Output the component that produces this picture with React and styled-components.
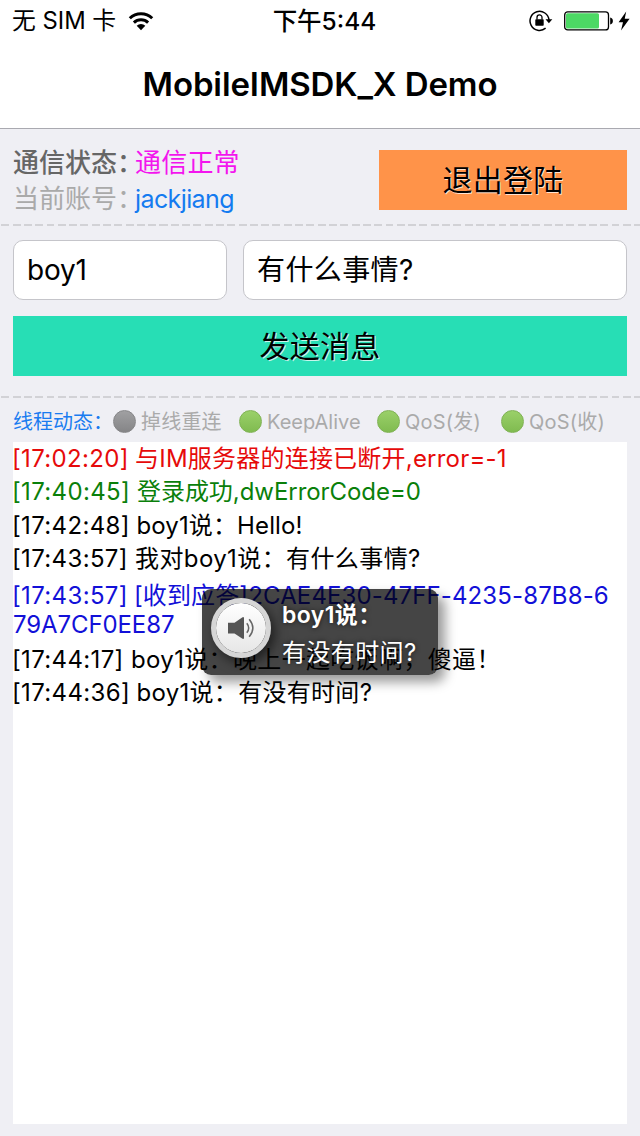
import React from "react";
import styled, { createGlobalStyle } from "styled-components";

const Global = createGlobalStyle`
  * { box-sizing: border-box; }
  body { margin: 0; background: #efeff4; }
`;

const Screen = styled.div`
  width: 640px;
  height: 1136px;
  display: flex;
  flex-direction: column;
  background: #efeff4;
  color: #000;
  font-family: Inter, "Noto Sans CJK SC", sans-serif;
  overflow: hidden;
`;

const Text = styled.span`
  white-space: pre;
  letter-spacing: ${(p) => p.$ls || 0}px;
`;

const TopBar = styled.header`
  height: 129px;
  background: #fff;
  border-bottom: 1px solid #a9a9b0;
`;

const StatusBar = styled.div`
  height: 40px;
  padding: 0 10px 0 12px;
  display: grid;
  grid-template-columns: 1fr auto 1fr;
  align-items: center;
  font-size: 23.8px;
  line-height: 42px;
`;

const Carrier = styled.div`
  display: flex;
  align-items: center;
  gap: 12px;
`;

const Clock = styled.div`
  font-size: 24.5px;
  font-weight: 500;
  padding-left: 7px;
`;

const Indicators = styled.div`
  display: flex;
  align-items: center;
  justify-content: flex-end;
`;

const Title = styled.h1`
  margin: 0;
  height: 88px;
  line-height: 89px;
  text-align: center;
  font-size: 33px;
  font-weight: 600;
  letter-spacing: -0.1px;
`;

const Account = styled.section`
  height: 95px;
  padding: 21px 13px 0;
  display: flex;
  justify-content: space-between;
`;

const Facts = styled.div`
  display: flex;
  flex-direction: column;
  font-size: 26px;
  line-height: 36px;
  margin-top: -5px;
`;

const Fact = styled.div`
  display: flex;
  height: 36px;
  color: ${(p) => p.$color};
`;

const FactName = styled.span`
  width: 122px;
  white-space: nowrap;
  color: ${(p) => p.$color};
  font-weight: ${(p) => p.$weight || 400};
`;

const FactValue = styled.span`
  font-size: ${(p) => p.$size || 26}px;
  letter-spacing: ${(p) => p.$ls || 0}px;
`;

const Button = styled.button`
  width: ${(p) => p.$width}px;
  height: 60px;
  padding: 0;
  border: 0;
  border-radius: 0;
  background: ${(p) => p.$bg};
  color: #000;
  font: 400 30px/61px Inter, "Noto Sans CJK SC", sans-serif;
  letter-spacing: 0.3px;
  text-shadow: 1px 1px 0 rgba(255, 255, 255, 0.75);
`;

const Divider = styled.div`
  height: 2px;
  background: repeating-linear-gradient(90deg, transparent 0 1.3px, #d2d2d6 1.3px 9.3px, transparent 9.3px 11.3px);
`;

const Compose = styled.section`
  height: 170px;
  padding: 14px 13px 0;
  display: flex;
  flex-direction: column;
  gap: 16px;
`;

const Fields = styled.div`
  display: grid;
  grid-template-columns: 214px 384px;
  gap: 16px;
`;

const Field = styled.div`
  height: 60px;
  padding-left: 13px;
  border: 1px solid #c5c5ca;
  border-radius: 10px;
  background: #fff;
  font-size: 28px;
  line-height: 59px;
`;

const Threads = styled.section`
  height: 44px;
  padding: 3px 13px 0;
  display: flex;
  align-items: flex-start;
  font-size: 20px;
  line-height: 42px;
  color: #aaa;
`;

const ThreadsName = styled.div`
  width: 100px;
  font-size: 20px;
  color: #1a7cf0;
  white-space: nowrap;
`;

const Thread = styled.div`
  width: ${(p) => p.$width}px;
  display: flex;
  gap: 5px;
  white-space: nowrap;
`;

const Dot = styled.i`
  width: 23px;
  height: 23px;
  margin-top: 9px;
  flex: none;
  border-radius: 50%;
  border: 1px solid ${(p) => (p.$on ? "#7fb253" : "#868688")};
  background: ${(p) =>
    p.$on ? "linear-gradient(#9ad069, #80bb50)" : "linear-gradient(#a0a0a2, #858587)"};
`;

const Log = styled.main`
  width: 614px;
  height: 682px;
  margin-left: 13px;
  background: #fff;
  font-size: 24px;
`;

const Entry = styled.div`
  height: ${(p) => p.$h || 33.4}px;
  line-height: 34px;
  color: ${(p) => p.$color || "#000"};
  white-space: pre;
`;

const Stamp = styled.span`
  display: inline-block;
  width: ${(p) => p.$width}px;
  margin-left: -1px;
  margin-right: 1px;
  letter-spacing: 0.35px;
`;

const Toast = styled.aside`
  position: absolute;
  left: 202px;
  top: 589px;
  width: 236px;
  height: 86px;
  padding: 9px 0 0 9px;
  display: flex;
  gap: 11px;
  border-radius: 9px;
  background: rgba(0, 0, 0, 0.73);
  box-shadow: 7px 7px 12px rgba(0, 0, 0, 0.4);
  color: #fff;
`;

const Badge = styled.div`
  width: 60px;
  height: 60px;
  flex: none;
  border-radius: 50%;
  border: 5px solid #d6d6d6;
  background: linear-gradient(#fff, #e6e6e6) padding-box;
  box-shadow: 4px 5px 12px rgba(0, 0, 0, 0.55);
  display: grid;
  place-items: center;
`;

const Message = styled.div`
  font-size: 24px;
  line-height: 38px;
  margin-top: -2px;
  text-shadow: 0 0 5px rgba(0, 0, 0, 0.7);
  white-space: nowrap;
`;

const From = styled.div`
  font-size: 23px;
  font-weight: 600;
  letter-spacing: 0.4px;
`;

const Wifi = () => (
  <svg width="26" height="20" viewBox="0 0 26 20">
    <g fill="none" stroke="#000" strokeWidth="3">
      <path d="M1.8 7.3A16 16 0 0 1 24.2 7.3" />
      <path d="M5.9 11.7A10.3 10.3 0 0 1 20.1 11.7" />
    </g>
    <path d="M13 19.2L8.7 14.8A6.2 6.2 0 0 1 17.3 14.8Z" />
  </svg>
);

const RotationLock = () => (
  <svg width="24" height="22" viewBox="0 0 24 22">
    <path d="M16.6 18.2A9.5 9.5 0 1 1 20 10" fill="none" stroke="#000" strokeWidth="1.5" />
    <path d="M16.5 9.3H23.3L19.9 13.3Z" />
    <rect x="6.3" y="9.3" width="8.4" height="6.5" rx=".7" />
    <path d="M8 9.5V7.4a2.5 2.5 0 0 1 5 0V9.5" fill="none" stroke="#000" strokeWidth="1.3" />
  </svg>
);

const Battery = () => (
  <svg width="50" height="20" viewBox="0 0 50 20">
    <rect x=".7" y=".9" width="43.8" height="18" rx="3" fill="none" stroke="#000" strokeWidth="1.3" />
    <rect x="2" y="2.2" width="33" height="15.4" rx="1.5" fill="#4cd964" />
    <path d="M46.2 6.4c3.6.7 3.6 6.3 0 7Z" />
  </svg>
);

const Bolt = () => (
  <svg width="12" height="20" viewBox="0 0 12 20">
    <path d="M8.2.5L.6 11.3H5L3 19.5L11.6 7.7H6.7Z" />
  </svg>
);

const Speaker = () => (
  <svg width="30" height="24" viewBox="0 0 30 24">
    <path d="M2 6.7H8.5L16.5 1.2H18V22.8H16.5L8.5 17.5H2Z" fill="#555" />
    <g fill="none" stroke="#666" strokeWidth="1.5">
      <path d="M20.8 7.2Q24.6 12 20.8 16.8" />
      <path d="M23.2 3.2Q30.5 12 23.2 20.8" />
    </g>
  </svg>
);

const Space = styled.span`
  width: ${(p) => p.$w}px;
`;

export default function App() {
  return (
    <Screen>
      <Global />
      <TopBar>
        <StatusBar>
          <Carrier>
            <Text>无 SIM 卡</Text>
            <Wifi />
          </Carrier>
          <Clock>下午5:44</Clock>
          <Indicators>
            <RotationLock />
            <Space $w={11} />
            <Battery />
            <Space $w={4} />
            <Bolt />
          </Indicators>
        </StatusBar>
        <Title>MobileIMSDK_X Demo</Title>
      </TopBar>

      <Account>
        <Facts>
          <Fact $color="#f315ee">
            <FactName $color="#666" $weight={500}>通信状态：</FactName>
            <FactValue $ls={0.2}>通信正常</FactValue>
          </Fact>
          <Fact $color="#147bf0">
            <FactName $color="#aaa">当前账号：</FactName>
            <FactValue $size={25} $ls={-0.6}>jackjiang</FactValue>
          </Fact>
        </Facts>
        <Button $width={248} $bg="#ff9349">退出登陆</Button>
      </Account>
      <Divider />

      <Compose>
        <Fields>
          <Field><Text $ls={-0.2}>boy1</Text></Field>
          <Field><Text $ls={0.4}>有什么事情?</Text></Field>
        </Fields>
        <Button $width={614} $bg="#27deb5">发送消息</Button>
      </Compose>
      <Divider />

      <Threads>
        <ThreadsName>线程动态：</ThreadsName>
        <Thread $width={126}><Dot /><Text $ls={0.2}>掉线重连</Text></Thread>
        <Thread $width={138}><Dot $on /><Text>KeepAlive</Text></Thread>
        <Thread $width={124}><Dot $on /><Text $ls={0.2}>QoS(发)</Text></Thread>
        <Thread $width={120}><Dot $on /><Text $ls={0.2}>QoS(收)</Text></Thread>
      </Threads>

      <Log>
        <Entry $color="#e60a0a"><Stamp $width={122}>[17:02:20]</Stamp><Text $ls={0.22}>与IM服务器的连接已断开,error=-1</Text></Entry>
        <Entry $color="#0a800a"><Stamp $width={124}>[17:40:45]</Stamp><Text $ls={-0.05}>登录成功,dwErrorCode=0</Text></Entry>
        <Entry><Stamp $width={123.5}>[17:42:48]</Stamp><Text $ls={0.12}>boy1说：Hello!</Text></Entry>
        <Entry $h={36.4}><Stamp $width={122}>[17:43:57]</Stamp><Text $ls={0.4}>我对boy1说：有什么事情?</Text></Entry>
        <Entry $color="#1210d8" $h={29}><Stamp $width={121}>[17:43:57]</Stamp><Text $ls={0.12}>[收到应答]2CAE4E30-47FF-4235-87B8-6</Text></Entry>
        <Entry $color="#1210d8" $h={35}><Text $ls={-0.1}>79A7CF0EE87</Text></Entry>
        <Entry><Stamp $width={118}>[17:44:17]</Stamp><Text $ls={0.35}>boy1说：晚上一起吃饭啊，傻逼！</Text></Entry>
        <Entry><Stamp $width={123.5}>[17:44:36]</Stamp><Text $ls={0.3}>boy1说：有没有时间?</Text></Entry>
      </Log>

      <Toast>
        <Badge><Speaker /></Badge>
        <Message>
          <From>boy1说：</From>
          <Text $ls={0.4}>有没有时间?</Text>
        </Message>
      </Toast>
    </Screen>
  );
}
